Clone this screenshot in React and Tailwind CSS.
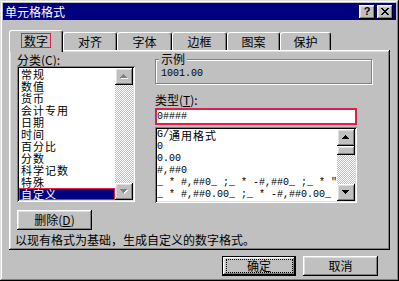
import React from "react";

const raised =
  "bg-[#c0c0c0] shadow-[inset_-1px_-1px_#000,inset_1px_1px_#fff,inset_-2px_-2px_#808080,inset_2px_2px_#dfdfdf]";
const sunken =
  "shadow-[inset_1px_1px_#808080,inset_-1px_-1px_#fff,inset_2px_2px_#000,inset_-2px_-2px_#dfdfdf]";
const mono = "font-['Liberation_Mono',monospace] text-[10px] leading-[12px]";
const track =
  "bg-[repeating-conic-gradient(#c0c0c0_0%_25%,#ffffff_0%_50%)] bg-[length:2px_2px]";

const categories = ["常规", "数值", "货币", "会计专用", "日期", "时间", "百分比", "分数", "科学记数", "特殊", "自定义"];

const formats = [
  { en: "G/", zh: "通用格式" },
  { en: "0" },
  { en: "0.00" },
  { en: "#,##0" },
  { en: '_ * #,##0_ ;_ * -#,##0_ ;_ * "-"_ ;_ @_ ' },
  { en: '_ * #,##0.00_ ;_ * -#,##0.00_ ;_ * "-"??_ ;_ @_ ' },
];

const tabs = [
  { label: "数字", w: "w-[54px]" },
  { label: "对齐", w: "w-[54px]" },
  { label: "字体", w: "w-[55px]" },
  { label: "边框", w: "w-[55px]" },
  { label: "图案", w: "w-[53px]" },
  { label: "保护", w: "w-[51px]" },
];

// pixel triangle, 7x4
function Arrow({ up, disabled }) {
  const rows = up ? [[3, 1], [2, 3], [1, 5], [0, 7]] : [[0, 7], [1, 5], [2, 3], [3, 1]];
  return (
    <svg width="8" height="5" viewBox="0 0 8 5" shapeRendering="crispEdges" className="block">
      {disabled &&
        rows.map(([x, w], i) => <rect key={"s" + i} x={x + 1} y={i + 1} width={w} height="1" fill="#fff" />)}
      {rows.map(([x, w], i) => (
        <rect key={i} x={x} y={i} width={w} height="1" fill={disabled ? "#808080" : "#000"} />
      ))}
    </svg>
  );
}

function Scrollbar({ disabled, thumb }) {
  return (
    <div className="w-[18px] flex flex-col">
      <div className={`h-[17px] flex items-center justify-center ${raised}`}>
        <Arrow up disabled={disabled} />
      </div>
      {thumb && <div className={`h-[9px] ${raised}`} />}
      <div className={`flex-1 ${track}`} />
      <div className={`h-[17px] flex items-center justify-center ${raised}`}>
        <Arrow disabled={disabled} />
      </div>
    </div>
  );
}

function CloseGlyph() {
  const rows = [[[0, 2], [6, 2]], [[1, 2], [5, 2]], [[2, 4]], [[3, 2]], [[2, 4]], [[1, 2], [5, 2]], [[0, 2], [6, 2]]];
  return (
    <svg width="8" height="7" viewBox="0 0 8 7" shapeRendering="crispEdges" className="block">
      {rows.map((segs, y) => segs.map(([x, w], i) => <rect key={y + "-" + i} x={x} y={y} width={w} height="1" fill="#000" />))}
    </svg>
  );
}

export default function App() {
  return (
    <div className="w-[399px] h-[281px] bg-[#c0c0c0] p-[3px] flex flex-col text-black text-[12px] leading-[12px] font-['Noto_Sans_CJK_SC',sans-serif] shadow-[inset_-1px_-1px_#000,inset_1px_1px_#dfdfdf,inset_-2px_-2px_#808080,inset_2px_2px_#fff]">
      {/* title bar */}
      <div className="h-[17px] bg-[#000080] flex items-center pl-[2px] pr-[3px]">
        <span className="text-white">单元格格式</span>
        <div className="ml-auto flex gap-[2px]">
          <div className={`w-[16px] h-[14px] flex items-center justify-center font-['Liberation_Sans',sans-serif] font-bold text-[11px] leading-[11px] ${raised}`}>
            ?
          </div>
          <div className={`w-[16px] h-[14px] flex items-center justify-center ${raised}`}>
            <CloseGlyph />
          </div>
        </div>
      </div>

      {/* tabs */}
      <div className="mt-[10px] ml-[6px] h-[20px] flex items-end">
        {tabs.map((t, i) =>
          i === 0 ? (
            <div
              key={t.label}
              className={`${t.w} h-[22px] -mb-[2px] relative z-10 bg-[#c0c0c0] border-t border-l border-white border-r border-r-black rounded-t-[3px] shadow-[inset_-1px_0_#808080] flex justify-center pt-[2px]`}
            >
              <span className="h-[15px] px-[2px] border border-[#e0204a] leading-[13px]">{t.label}</span>
            </div>
          ) : (
            <div
              key={t.label}
              className={`${t.w} h-[18px] bg-[#c0c0c0] border-t border-l border-white border-r border-r-black rounded-t-[3px] shadow-[inset_-1px_0_#808080] flex items-center justify-center`}
            >
              {t.label}
            </div>
          )
        )}
      </div>

      {/* panel */}
      <div className="ml-[6px] w-[381px] h-[200px] flex flex-col shadow-[inset_-1px_-1px_#000,inset_1px_1px_#fff,inset_-2px_-2px_#808080,inset_2px_2px_#dfdfdf]">
        <div className="flex pl-[8px] pt-[4px]">
          {/* category */}
          <div className="w-[118px] flex flex-col">
            <div className="h-[12px] whitespace-nowrap">
              分类(<span className="underline">C</span>):
            </div>
            <div className={`h-[136px] flex p-[2px] bg-white ${sunken}`}>
              <div className="flex-1 flex flex-col text-[11px] tracking-[1px]">
                {categories.map((c, i) =>
                  i === categories.length - 1 ? (
                    <div key={c} className="h-[12px] pl-[1px] bg-[#000080] text-white border border-[#e0204a] leading-[10px] whitespace-nowrap">
                      {c}
                    </div>
                  ) : (
                    <div key={c} className="h-[12px] pl-[2px] leading-[12px] whitespace-nowrap">
                      {c}
                    </div>
                  )
                )}
              </div>
              <Scrollbar disabled />
            </div>
          </div>

          {/* right side */}
          <div className="ml-[20px] w-[217px] flex flex-col">
            <div className="mt-[5px] w-[217px] h-[25px] border border-[#808080] shadow-[inset_1px_1px_#fff,1px_1px_#fff]">
              <span className="block w-fit -mt-[7px] ml-[3px] px-[2px] bg-[#c0c0c0]">示例</span>
              <div className={`${mono} mt-[3px] pl-[5px]`}>1001.00</div>
            </div>

            <div className="mt-[10px] h-[12px] whitespace-nowrap">
              类型(<span className="underline">T</span>):
            </div>

            <div className="mt-[2px] w-[202px] h-[17px] bg-white border-2 border-[#e0204a] flex items-center">
              <span className={mono}>0####</span>
            </div>

            <div className={`mt-[2px] w-[202px] h-[76px] flex p-[2px] bg-white ${sunken}`}>
              <div className="flex-1 flex flex-col overflow-hidden">
                {formats.map((f) => (
                  <div key={f.en} className="h-[12px] flex items-start whitespace-pre">
                    <span className={mono}>{f.en}</span>
                    {f.zh && <span className="text-[11px] tracking-[1px]">{f.zh}</span>}
                  </div>
                ))}
              </div>
              <Scrollbar thumb />
            </div>
          </div>
        </div>

        <div className={`mt-[7px] ml-[8px] w-[75px] h-[20px] flex items-center justify-center ${raised}`}>
          删除(<span className="underline">D</span>)
        </div>

        <div className="mt-[4px] ml-[6px] h-[12px] whitespace-nowrap">以现有格式为基础，生成自定义的数字格式。</div>
      </div>

      {/* dialog buttons */}
      <div className="mt-[6px] flex justify-end gap-[7px] pr-[18px]">
        <div className="w-[74px] h-[20px] border border-black">
          <div className={`w-full h-full flex items-center justify-center ${raised}`}>
            <span className="w-[67px] h-[14px] border border-dotted border-black flex items-center justify-center">确定</span>
          </div>
        </div>
        <div className={`w-[75px] h-[20px] flex items-center justify-center ${raised}`}>取消</div>
      </div>
    </div>
  );
}
